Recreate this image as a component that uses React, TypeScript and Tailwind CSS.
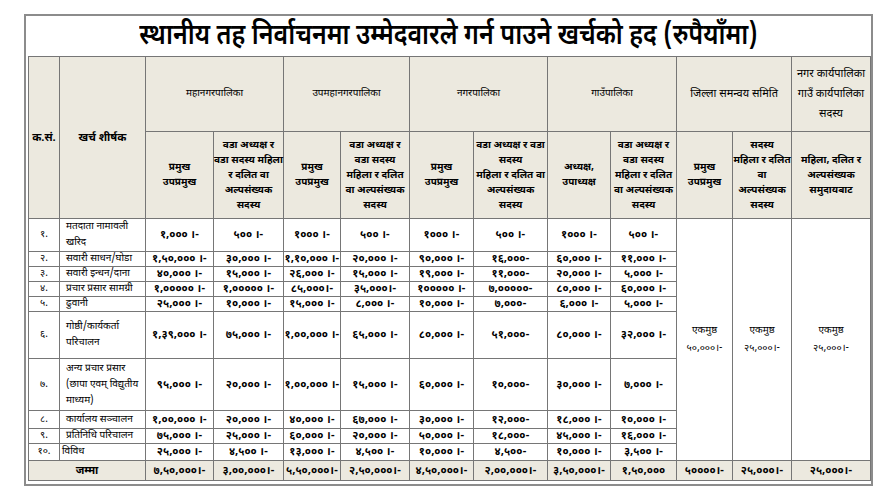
import React from "react";

const FONT = '"Noto Sans Devanagari", "Lohit Devanagari", "Noto Sans", "Liberation Sans", sans-serif';

const widths = [31, 86, 68, 70, 57, 69, 64, 74, 63, 66, 56, 59, 79];

type Row = { n: string; label: React.ReactNode; h: string; vals: string[]; labelCls?: string };

const rows: Row[] = [
  { n: "१.", label: <>मतदाता नामावली<br />खरिद</>, h: "h-[33px]", vals: ["१,००० ।-", "५०० ।-", "१००० ।-", "५०० ।-", "१००० ।-", "५०० ।-", "१००० ।-", "५०० ।-"] },
  { n: "२.", label: "सवारी साधन/घोडा", h: "h-[15px]", vals: ["१,५०,००० ।-", "३०,००० ।-", "१,१०,००० ।-", "२०,००० ।-", "९०,००० ।-", "१६,०००-", "६०,००० ।-", "११,००० ।-"] },
  { n: "३.", label: "सवारी इन्धन/दाना", h: "h-[15px]", vals: ["४०,००० ।-", "१५,००० ।-", "२६,००० ।-", "१५,००० ।-", "१९,००० ।-", "११,०००-", "२०,००० ।-", "५,००० ।-"] },
  { n: "४.", label: "प्रचार प्रसार सामग्री", h: "h-[15px]", vals: ["१,००००० ।-", "१,००००० ।-", "८५,०००।-", "३५,०००।-", "१००००० ।-", "७,०००००-", "८०,००० ।-", "६०,००० ।-"] },
  { n: "५.", label: "ढुवानी", h: "h-[15px]", vals: ["२५,००० ।-", "१०,००० ।-", "१५,००० ।-", "८,००० ।-", "१०,००० ।-", "७,०००-", "६,००० ।-", "५,००० ।-"] },
  { n: "६.", label: <>गोष्ठी/कार्यकर्ता<br />परिचालन</>, h: "h-[47px]", vals: ["१,३९,००० ।-", "७५,००० ।-", "१,००,००० ।-", "६५,००० ।-", "८०,००० ।-", "५१,०००-", "८०,००० ।-", "३२,००० ।-"] },
  { n: "७.", label: <>अन्य प्रचार प्रसार<br />(छापा एवम् विद्युतीय<br />माध्यम)</>, h: "h-[52px]", vals: ["९५,००० ।-", "२०,००० ।-", "१,००,००० ।-", "१५,००० ।-", "६०,००० ।-", "१०,०००-", "३०,००० ।-", "७,००० ।-"] },
  { n: "८.", label: "कार्यालय सञ्चालन", h: "h-[18px]", vals: ["१,००,००० ।-", "२०,००० ।-", "४०,००० ।-", "६७,००० ।-", "३०,००० ।-", "१२,०००-", "१८,००० ।-", "१०,००० ।-"] },
  { n: "९.", label: "प्रतिनिधि परिचालन", h: "h-[15px]", vals: ["७५,००० ।-", "२५,००० ।-", "६०,००० ।-", "२०,००० ।-", "५०,००० ।-", "१८,०००-", "४५,००० ।-", "१६,००० ।-"] },
  { n: "१०.", label: "विविध", h: "h-[17px]", vals: ["२५,००० ।-", "४,५०० ।-", "१३,००० ।-", "४,५०० ।-", "१०,००० ।-", "४,५००-", "१०,००० ।-", "३,५०० ।-"], labelCls: "pl-[2px]" },
];

const totals = ["७,५०,०००।-", "३,००,०००।-", "५,५०,०००।-", "२,५०,०००।-", "४,५०,०००।-", "२,००,०००।-", "३,५०,०००।-", "१,५०,०००", "५००००।-", "२५,०००।-", "२५,०००।-"];

const bd = "border border-[#767676]";
const wardText = <>वडा अध्यक्ष र<br />वडा सदस्य महिला<br />र दलित वा<br />अल्पसंख्यक<br />सदस्य</>;

export default function App() {
  return (
    <div className="w-[890px] h-[500px] bg-white text-black" style={{ fontFamily: FONT }}>
      <div className="pt-[14px] pl-[24px]">
        <div className="w-[849px] h-[472px] border-2 border-[#8c8c8c] flex flex-col">
          <div className="h-[40px] flex items-center justify-center pt-[2px]">
            <span className="inline-block text-[29px] font-semibold leading-none scale-x-[0.86] whitespace-nowrap">
              स्थानीय तह निर्वाचनमा उम्मेदवारले गर्न पाउने खर्चको हद (रुपैयाँमा)
            </span>
          </div>
          <div className="pl-[2px]">
            <table className="table-fixed border-collapse w-[842px] text-[10px] leading-[12px]">
              <colgroup>
                {widths.map((w, i) => (
                  <col key={i} style={{ width: w }} />
                ))}
              </colgroup>
              <thead>
                <tr className="h-[75px] bg-[#ece9df]">
                  <th rowSpan={2} className={`${bd} font-bold text-[11px]`}>क.सं.</th>
                  <th rowSpan={2} className={`${bd} font-bold text-[11px]`}>खर्च शीर्षक</th>
                  <th colSpan={2} className={`${bd} font-normal`}>महानगरपालिका</th>
                  <th colSpan={2} className={`${bd} font-normal`}>उपमहानगरपालिका</th>
                  <th colSpan={2} className={`${bd} font-normal`}>नगरपालिका</th>
                  <th colSpan={2} className={`${bd} font-normal`}>गाउँपालिका</th>
                  <th colSpan={2} className={`${bd} font-normal text-[11px]`}>जिल्ला समन्वय समिति</th>
                  <th className={`${bd} font-normal text-[11px] leading-[20px]`}>नगर कार्यपालिका<br />गाउँ कार्यपालिका<br />सदस्य</th>
                </tr>
                <tr className="h-[87px] bg-[#ece9df] font-bold leading-[15px]">
                  <th className={bd}>प्रमुख<br />उपप्रमुख</th>
                  <th className={bd}>{wardText}</th>
                  <th className={bd}>प्रमुख<br />उपप्रमुख</th>
                  <th className={bd}>वडा अध्यक्ष र<br />वडा सदस्य<br />महिला र दलित<br />वा अल्पसंख्यक<br />सदस्य</th>
                  <th className={bd}>प्रमुख<br />उपप्रमुख</th>
                  <th className={bd}>वडा अध्यक्ष र वडा<br />सदस्य<br />महिला र दलित वा<br />अल्पसंख्यक<br />सदस्य</th>
                  <th className={bd}>अध्यक्ष,<br />उपाध्यक्ष</th>
                  <th className={bd}>वडा अध्यक्ष र<br />वडा सदस्य<br />महिला र दलित<br />वा अल्पसंख्यक<br />सदस्य</th>
                  <th className={bd}>प्रमुख<br />उपप्रमुख</th>
                  <th className={bd}>सदस्य<br />महिला र दलित<br />वा<br />अल्पसंख्यक<br />सदस्य</th>
                  <th className={bd}>महिला, दलित र<br />अल्पसंख्यक<br />समुदायबाट</th>
                </tr>
              </thead>
              <tbody>
                {rows.map((r, i) => (
                  <tr key={i} className={r.h}>
                    <td className={`${bd} text-center p-0`}>{r.n}</td>
                    <td className={`${bd} text-left p-0 ${r.labelCls ?? "pl-[6px]"} ${i === 0 || i === 5 || i === 6 ? "leading-[16px]" : ""}`}>{r.label}</td>
                    {r.vals.map((v, j) => (
                      <td key={j} className={`${bd} text-center p-0 font-bold text-[11px]`}>{v}</td>
                    ))}
                    {i === 0 && (
                      <>
                        <td rowSpan={10} className={`${bd} text-center p-0 leading-[18px]`}>एकमुष्ठ<br />५०,०००।-</td>
                        <td rowSpan={10} className={`${bd} text-center p-0 leading-[18px]`}>एकमुष्ठ<br />२५,०००।-</td>
                        <td rowSpan={10} className={`${bd} text-center p-0 leading-[18px]`}>एकमुष्ठ<br />२५,०००।-</td>
                      </>
                    )}
                  </tr>
                ))}
                <tr className="h-[20px] bg-[#ece9df]">
                  <td colSpan={2} className={`${bd} text-center p-0 font-bold text-[11px]`}>जम्मा</td>
                  {totals.map((t, j) => (
                    <td key={j} className={`${bd} text-center p-0 font-bold text-[11px]`}>{t}</td>
                  ))}
                </tr>
              </tbody>
            </table>
          </div>
        </div>
      </div>
    </div>
  );
}
